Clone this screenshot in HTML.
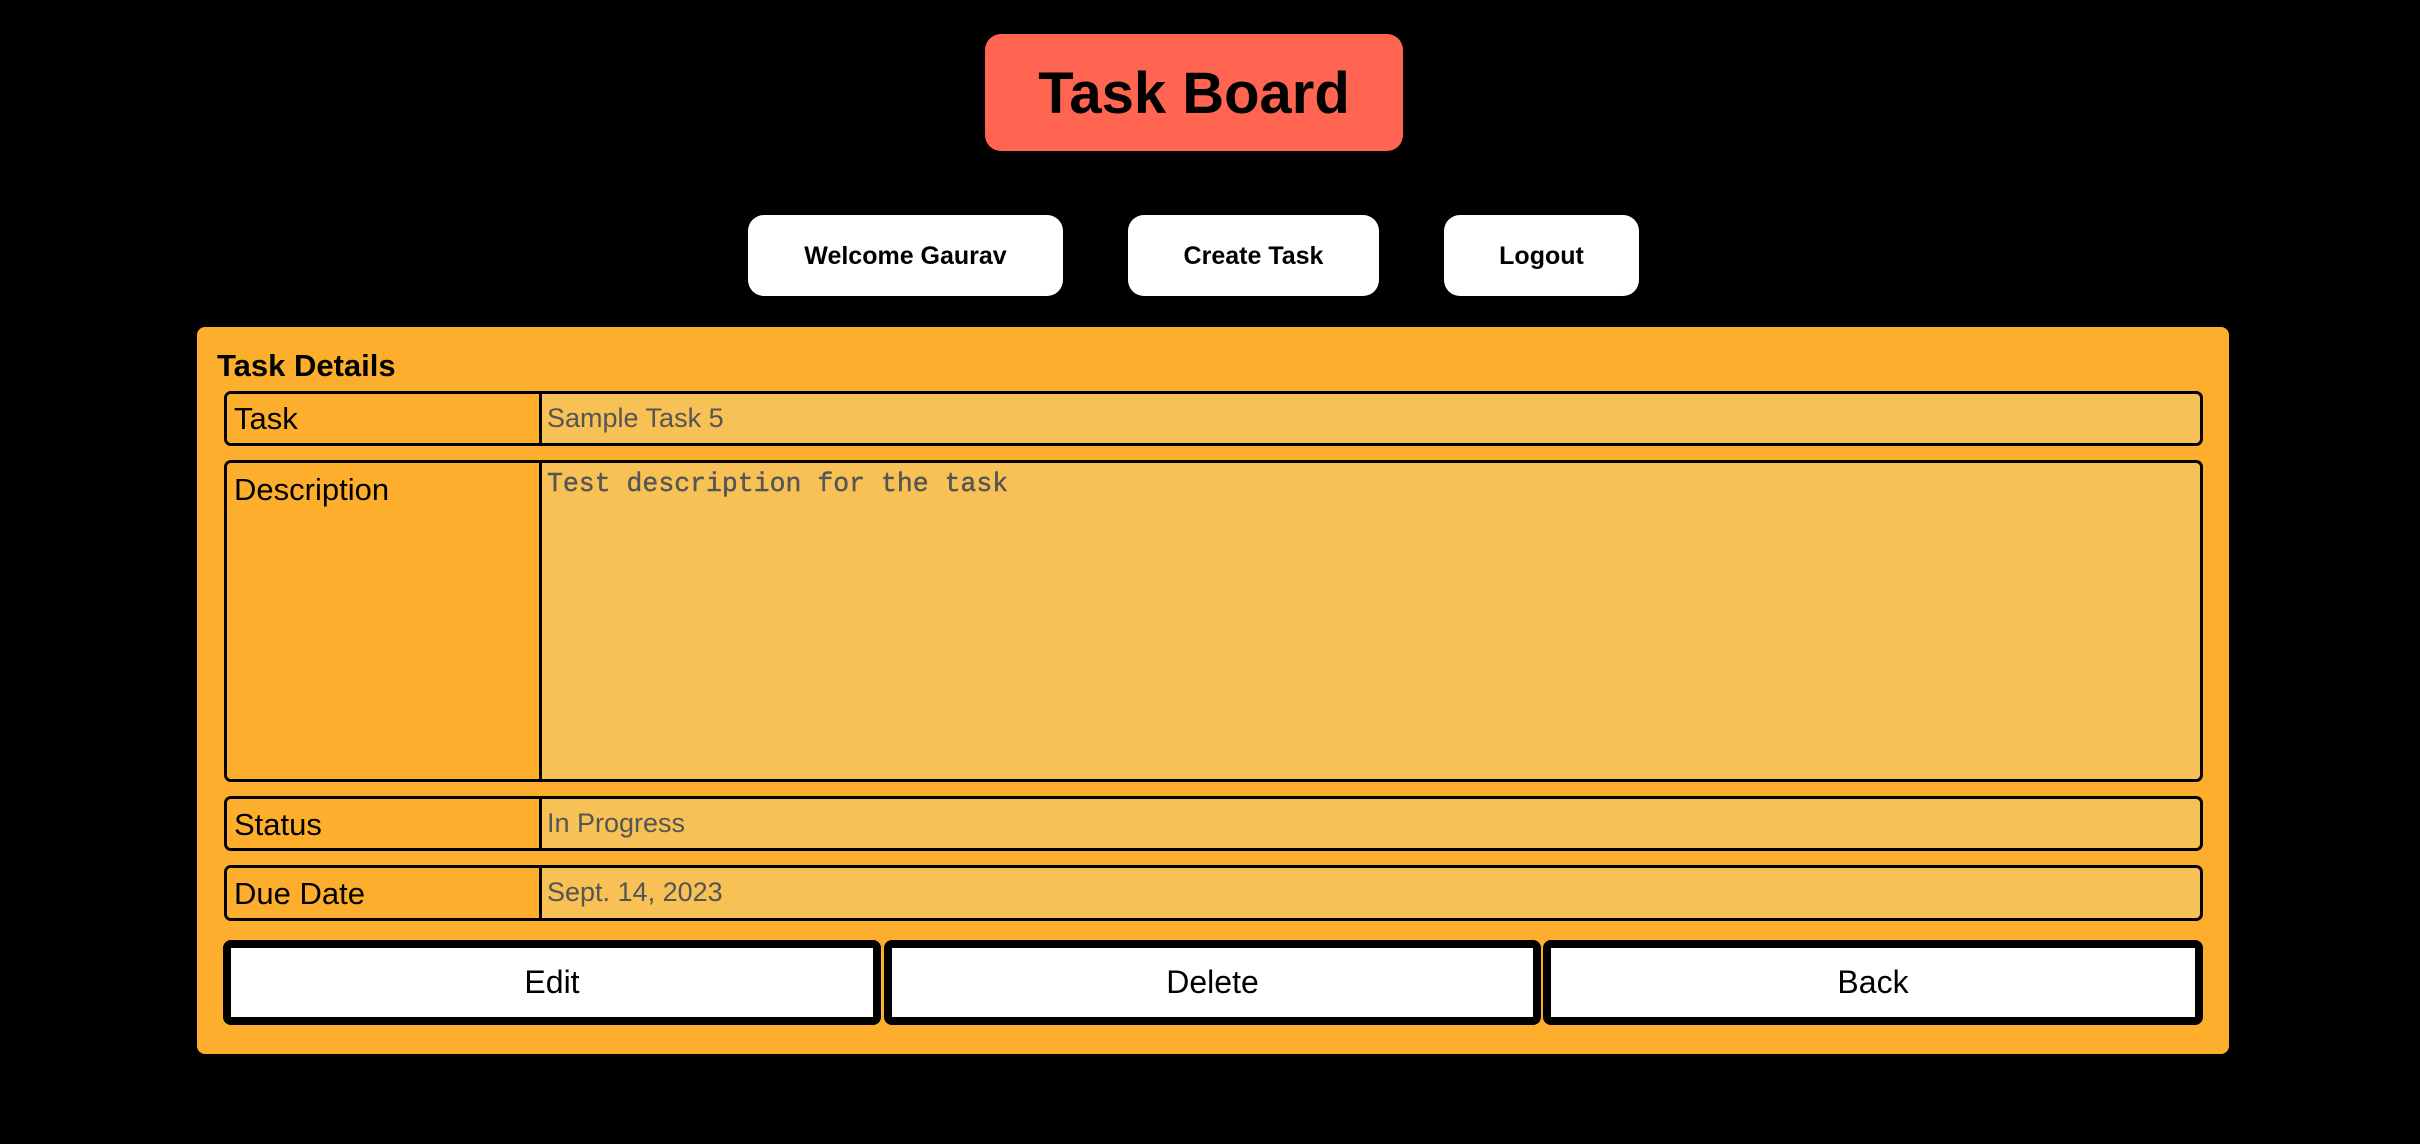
<!DOCTYPE html>
<html><head><meta charset="utf-8"><style>
body{margin:0;width:2420px;height:1144px;background:#000;position:relative;overflow:hidden;font-family:"Liberation Sans",Arial,sans-serif}
.a{position:absolute;box-sizing:border-box}
.title{left:985px;top:34px;width:418px;height:117px;background:#FF6550;border-radius:16px;font-weight:bold;font-size:58px;line-height:119px;text-align:center;color:#000}
.nav{top:215px;height:81px;background:#fff;border-radius:16px;font-weight:bold;font-size:25px;line-height:83px;text-align:center;color:#000}
.panel{left:197px;top:327px;width:2032px;height:727px;background:#FDAE2D;border-radius:8px}
.row{left:224px;width:1979px;border:3px solid #000;border-radius:7px;background:#F8C156;overflow:hidden}
.lab{position:absolute;left:0;top:0;bottom:0;width:315px;background:#FDAE2D;border-right:3px solid #000;font-size:31px;padding-left:7px;box-sizing:border-box}
.val{position:absolute;left:320px;font-size:27px;color:#555}
.btn{top:940px;height:85px;border:8px solid #000;border-radius:8px;background:#fff;font-size:32px;line-height:69px;text-align:center;color:#000}
</style></head><body>
<div class="a title">Task Board</div>
<div class="a nav" style="left:748px;width:315px">Welcome Gaurav</div>
<div class="a nav" style="left:1128px;width:251px">Create Task</div>
<div class="a nav" style="left:1444px;width:195px">Logout</div>
<div class="a panel"></div>
<div class="a" style="left:217px;top:346px;font-size:31px;font-weight:bold;line-height:40px">Task Details</div>
<div class="a row" style="top:391px;height:55px"><div class="lab" style="line-height:49px">Task</div><div class="val" style="top:0;line-height:49px">Sample Task 5</div></div>
<div class="a row" style="top:460px;height:322px"><div class="lab" style="padding-top:7px;line-height:40px">Description</div><div class="val" style="top:4px;font-family:'Liberation Mono',monospace;font-size:26.5px;line-height:34px;-webkit-text-stroke:0.4px #555">Test description for the task</div></div>
<div class="a row" style="top:796px;height:55px"><div class="lab" style="line-height:52px">Status</div><div class="val" style="top:0;line-height:49px">In Progress</div></div>
<div class="a row" style="top:865px;height:56px"><div class="lab" style="line-height:52px">Due Date</div><div class="val" style="top:0;line-height:49px">Sept. 14, 2023</div></div>
<div class="a btn" style="left:223px;width:658px">Edit</div>
<div class="a btn" style="left:884px;width:657px">Delete</div>
<div class="a btn" style="left:1543px;width:660px">Back</div>
</body></html>
